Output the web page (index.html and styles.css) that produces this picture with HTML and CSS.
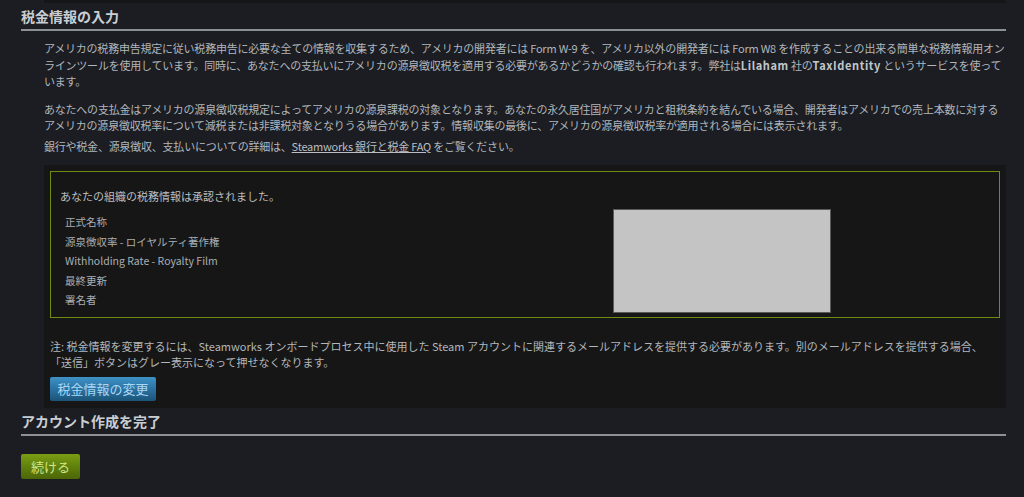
FILE: index.html
```html
<!DOCTYPE html>
<html lang="ja">
<head>
<meta charset="utf-8">
<link rel="stylesheet" href="styles.css">
</head>
<body>
<div class="page">
  <div class="top-strip"></div>
  <h2 class="section-title">税金情報の入力</h2>
  <div class="section-body">
    <p class="para">アメリカの税務申告規定に従い税務申告に必要な全ての情報を収集するため、アメリカの開発者には Form W-9 を、アメリカ以外の開発者には Form W8 を作成することの出来る簡単な税務情報用オンラインツールを使用しています。同時に、あなたへの支払いにアメリカの源泉徴収税を適用する必要があるかどうかの確認も行われます。弊社は<b>Lilaham</b> 社の<b>TaxIdentity</b> というサービスを使っています。</p>
    <p class="para para-2">あなたへの支払金はアメリカの源泉徴収税規定によってアメリカの源泉課税の対象となります。あなたの永久居住国がアメリカと租税条約を結んでいる場合、開発者はアメリカでの売上本数に対するアメリカの源泉徴収税率について減税または非課税対象となりうる場合があります。情報収集の最後に、アメリカの源泉徴収税率が適用される場合には表示されます。</p>
    <p class="para para-3">銀行や税金、源泉徴収、支払いについての詳細は、<a class="link" href="#">Steamworks 銀行と税金 FAQ</a> をご覧ください。</p>

    <div class="dark-box">
      <div class="approved">
        <p class="approved-title">あなたの組織の税務情報は承認されました。</p>
        <div class="approved-row">
          <ul class="labels">
            <li>正式名称</li>
            <li>源泉徴収率 - ロイヤルティ著作権</li>
            <li>Withholding Rate - Royalty Film</li>
            <li>最終更新</li>
            <li>署名者</li>
          </ul>
          <div class="redacted"></div>
        </div>
      </div>
      <p class="note">注: 税金情報を変更するには、Steamworks オンボードプロセス中に使用した Steam アカウントに関連するメールアドレスを提供する必要があります。別のメールアドレスを提供する場合、<br>「送信」ボタンはグレー表示になって押せなくなります。</p>
      <a class="btn-blue" href="#">税金情報の変更</a>
    </div>
  </div>

  <h2 class="section-title section-title-2">アカウント作成を完了</h2>
  <a class="btn-green" href="#">続ける</a>
</div>
</body>
</html>
```

FILE: styles.css
```css
html, body {
  margin: 0;
  padding: 0;
  background: #1b1d22;
}

body {
  font-family: "Noto Sans CJK JP", "Noto Sans", sans-serif;
  color: #b0b6bc;
  font-size: 11px;
}

.page {
  padding: 0 18px 0 21px;
}

.top-strip {
  height: 3px;
  margin-left: 23px;
  background: #151617;
}

.section-title {
  margin: 0;
  padding-top: 4px;
  height: 22px;
  font-size: 14px;
  line-height: 18px;
  font-weight: bold;
  color: #c9ced3;
  border-bottom: 2px solid #8b9197;
}

.section-body {
  padding-left: 23px;
  padding-top: 9px;
}

.para {
  margin: 0;
  line-height: 16.5px;
  letter-spacing: -0.22px;
}

.para-2 {
  margin-top: 11px;
}

.para-3 {
  margin-top: 4px;
}

.para b {
  font-weight: bold;
  color: #c2c7cc;
  letter-spacing: 0.6px;
}

.link {
  color: #b8bec4;
  text-decoration: underline;
}

.dark-box {
  margin-top: 11px;
  background: #161616;
  padding: 6px 6px 7px 6px;
}

.approved {
  border: 1px solid #6f8c12;
  height: 145px;
  padding: 0 9px;
}

.approved-title {
  margin: 16px 0 0 0;
  line-height: 17px;
  color: #b9bec3;
}

.approved-row {
  display: flex;
  margin-top: 7px;
}

.labels {
  list-style: none;
  margin: 0;
  padding: 0 0 0 5px;
  width: 548px;
  flex: none;
  font-size: 10.5px;
}

.labels li {
  line-height: 19.5px;
  color: #a9aeb3;
}

.redacted {
  width: 216px;
  height: 102px;
  margin-top: -3px;
  background: #c4c4c4;
  border: 1px solid #5a5a5a;
}

.note {
  margin: 21px 0 0 0;
  line-height: 15.5px;
  color: #b2b7bc;
}

.btn-blue {
  display: inline-block;
  margin-top: 7px;
  width: 106px;
  height: 24px;
  line-height: 24px;
  text-align: center;
  font-size: 13px;
  color: #a9d8f5;
  text-decoration: none;
  border-radius: 2px;
  background: linear-gradient(to bottom, #3f92c6 0%, #2a72a3 50%, #1b5478 100%);
}

.section-title-2 {
  margin-top: 0;
}

.btn-green {
  display: inline-block;
  margin-top: 18px;
  width: 59px;
  height: 25px;
  line-height: 25px;
  text-align: center;
  font-size: 13px;
  color: #d3e68a;
  text-decoration: none;
  border-radius: 2px;
  background: linear-gradient(to bottom, #7b9d13 0%, #5e7e0c 55%, #4c6607 100%);
}
```
